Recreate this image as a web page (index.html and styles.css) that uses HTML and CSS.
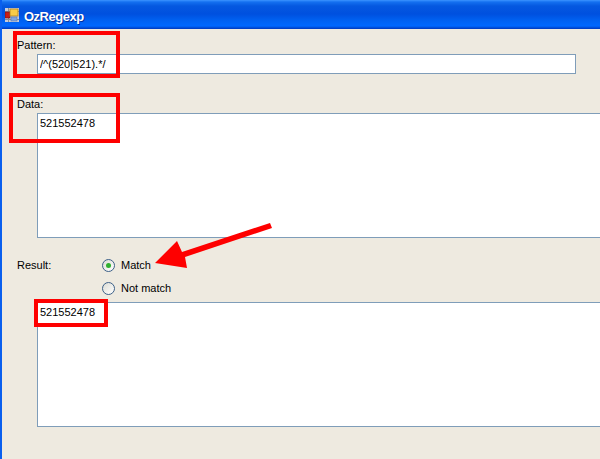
FILE: index.html
```html
<!DOCTYPE html>
<html lang="en">
<head>
    <meta charset="UTF-8">
    <meta name="viewport" content="width=device-width, initial-scale=1.0">
    <title>OzRegexp</title>
    <link rel="stylesheet" href="styles.css">
</head>
<body>
    <div class="window">
        <div class="titlebar">
            <svg class="app-icon" width="14" height="14" viewBox="0 0 14 14">
                <rect x="0" y="0" width="14" height="14" fill="#c8ccd8"/>
                <path d="M3.5 0V14M0 3.5H14M0 11.5H14" stroke="#8c8c90" stroke-width="1"/>
                <rect x="0" y="4" width="5" height="6" fill="#c81c14" stroke="#701010" stroke-width="0.6"/>
                <rect x="5" y="1" width="8" height="7" fill="#f8cc48" stroke="#b08020" stroke-width="0.8"/>
                <rect x="6" y="9" width="6" height="4" fill="#80a4e0" stroke="#5878b0" stroke-width="0.6"/>
            </svg>
            <span class="title-text">OzRegexp</span>
        </div>

        <div class="form">
            <div class="label pattern-label">Pattern:</div>
            <input class="pattern-input" type="text" value="/^(520|521).*/">

            <div class="label data-label">Data:</div>
            <textarea class="box data-box">521552478</textarea>

            <div class="result-row">
                <div class="label result-label">Result:</div>
                <div class="radios">
                    <div class="radio-row">
                        <span class="radio checked"></span>
                        <span class="label">Match</span>
                    </div>
                    <div class="radio-row">
                        <span class="radio"></span>
                        <span class="label">Not match</span>
                    </div>
                </div>
            </div>
            <textarea class="box result-box">521552478</textarea>
        </div>

        <!-- annotations on top of the screenshot -->
        <div class="mark mark-pattern"></div>
        <div class="mark mark-data"></div>
        <div class="mark mark-result"></div>
        <svg class="arrow" width="120" height="46" viewBox="0 0 120 46">
            <polygon points="0,40 22,18 27,29 115,0 117,5 30,34 32,45" fill="#fe0000"/>
        </svg>
    </div>
</body>
</html>
```

FILE: styles.css
```css
/* general */
html, body {
    margin: 0;
    padding: 0;
}

body {
    width: 600px;
    height: 459px;
    overflow: hidden;
    font-family: "Liberation Sans", Arial, sans-serif;
    font-size: 11px;
    color: #000;
}

.window {
    position: relative;
    width: 600px;
    height: 459px;
    overflow: hidden;
    background-color: #eeeae0;
    border-left: 2px solid #0a5fee;
    box-sizing: border-box;
}

.titlebar {
    display: flex;
    align-items: center;
    height: 29px;
    margin-left: -2px;
    padding: 1px 0 0 5px;
    box-sizing: border-box;
    background: linear-gradient(to bottom, #3c94ff 0px, #1470f0 2px, #0558e0 6px, #0050df 14px, #0060f0 20px, #0068ff 26px, #0048d0 28px, #0038c0 29px);
}

.app-icon {
    flex: none;
}

.title-text {
    margin-left: 5px;
    padding-top: 2px;
    font-size: 13px;
    font-weight: bold;
    letter-spacing: -0.5px;
    color: #fff;
    text-shadow: 1px 1px 0 #0030a0;
}

.form {
    display: flex;
    flex-direction: column;
    padding-top: 10px;
}

.label {
    line-height: 13px;
}

.pattern-label,
.data-label,
.result-label {
    margin-left: 15px;
}

.pattern-input,
.box {
    display: block;
    margin: 0 0 0 35px;
    padding: 0 2px;
    box-sizing: border-box;
    border: 1px solid #7f9db9;
    border-radius: 0;
    outline: none;
    background: #fff;
    font-family: inherit;
    font-size: 11px;
    color: #000;
    resize: none;
}

.pattern-input {
    width: 539px;
    height: 20px;
    margin-top: 2px;
}

.data-label {
    margin-top: 24px;
}

.box {
    width: 580px;
    height: 125px;
    padding-top: 3px;
    overflow: hidden;
}

.data-box {
    margin-top: 2px;
}

.result-row {
    display: flex;
    margin-top: 21px;
}

.result-label {
    width: 85px;
}

.radios {
    display: flex;
    flex-direction: column;
    gap: 10px;
}

.radio-row {
    display: flex;
    align-items: center;
    gap: 6px;
    height: 13px;
}

.radio {
    position: relative;
    width: 13px;
    height: 13px;
    box-sizing: border-box;
    border: 1px solid #3c6088;
    border-radius: 50%;
    background: linear-gradient(135deg, #dcdcd4, #fff);
}

.radio.checked::after {
    content: "";
    position: absolute;
    left: 3px;
    top: 3px;
    width: 5px;
    height: 5px;
    border-radius: 50%;
    background: #2fb02f;
}

.result-box {
    margin-top: 7px;
}

/* red annotations */
.mark {
    position: absolute;
    box-sizing: border-box;
    border: 4px solid #fe0000;
}

.mark-pattern {
    left: 11px;
    top: 31px;
    width: 107px;
    height: 47px;
}

.mark-data {
    left: 7px;
    top: 93px;
    width: 111px;
    height: 50px;
}

.mark-result {
    left: 32px;
    top: 299px;
    width: 74px;
    height: 28px;
}

.arrow {
    position: absolute;
    left: 153px;
    top: 223px;
}
```
